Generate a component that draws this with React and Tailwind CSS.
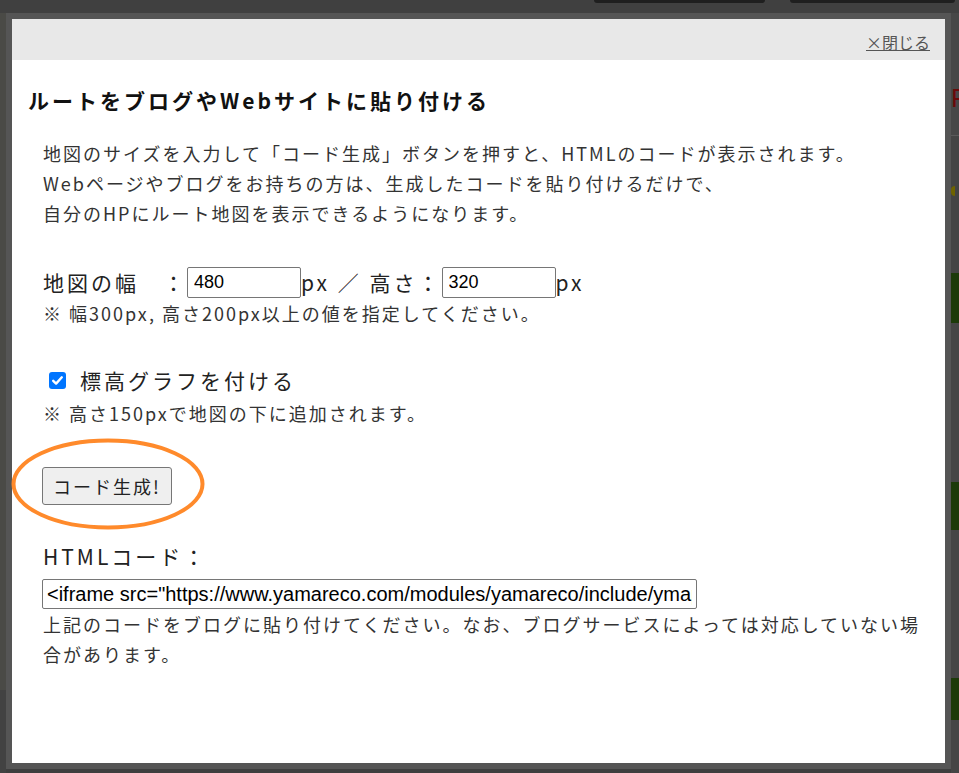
import { useState } from 'react';

const CODE = '<iframe src="https://www.yamareco.com/modules/yamareco/include/ymaprt.php?did=0&w=480&h=320&elev=1" width="480" height="470" frameborder="0" scrolling="no"></iframe>';

function CheckMark() {
  return (
    <span className="w-[17px] h-[17px] rounded-[3px] bg-[#0075ff] flex items-center justify-center shrink-0">
      <svg width="13" height="13" viewBox="0 0 13 13" fill="none">
        <path d="M2.2 6.8 L5.1 9.6 L10.8 3.3" stroke="white" strokeWidth="2.4" strokeLinecap="round" strokeLinejoin="round" />
      </svg>
    </span>
  );
}

function BackgroundPage() {
  return (
    <div className="w-full h-full flex flex-col bg-[#3e3e3e]">
      <div className="h-[13px] flex justify-end gap-[25px] pr-[4px] bg-[#404040]">
        <div className="w-[171px] h-[3px] rounded-b-[6px] bg-[#1f1f1f]" />
        <div className="w-[165px] h-[3px] rounded-b-[6px] bg-[#1f1f1f]" />
      </div>
      <div className="flex-1 flex">
        <div className="w-[6px] flex flex-col">
          <div className="h-[677px] bg-[#4a4a46]" />
          <div className="flex-1 bg-[#424242]" />
        </div>
        <div className="flex-1" />
        <div className="w-[8px] flex flex-col">
          <div className="h-[122px] bg-[#474747] pt-[72px] overflow-hidden">
            <span className="block text-[26px] leading-[26px] text-[#6b0a0a] font-['Liberation_Sans',sans-serif]">F</span>
          </div>
          <div className="h-[1px] bg-[#5a5a5a]" />
          <div className="h-[137px] bg-[#444] pt-[50px]">
            <div className="w-[4px] h-[10px] rounded-l-full bg-[#6e6300]" />
          </div>
          <div className="h-[50px] bg-[#1c3a09]" />
          <div className="h-[159px] bg-[#454545]" />
          <div className="h-[48px] bg-[#1c3a09]" />
          <div className="h-[148px] bg-[#454545]" />
          <div className="h-[42px] bg-[#1c3a09]" />
          <div className="flex-1 bg-[#454545]" />
        </div>
      </div>
    </div>
  );
}

export default function App() {
  const [w, setW] = useState('480');
  const [h, setH] = useState('320');
  const [elev, setElev] = useState(true);

  return (
    <div className="w-[959px] h-[773px] relative overflow-hidden font-['Noto_Sans_CJK_JP',sans-serif]">
      <BackgroundPage />

      {/* modal */}
      <div className="absolute left-[6px] top-[13px] w-[945px] h-[756px] bg-[#555] p-[6px]">
        <div className="h-full bg-white flex flex-col">
          <div className="h-[41px] shrink-0 bg-[#e8e8e8] flex items-center justify-end pr-[15px] pt-[5px]">
            <a className="text-[16px] leading-[20px] text-[#555] underline cursor-pointer">×閉じる</a>
          </div>

          <div className="pl-[16px]">
            <h2 className="mt-[22px] text-[21px] font-bold tracking-[3px] leading-[36px] text-[#111]">
              ルートをブログやWebサイトに貼り付ける
            </h2>
          </div>

          <div className="pl-[31px] pr-[12px] text-[#333]">
            <p className="mt-[20px] text-[18px] tracking-[2px] leading-[30px]">
              地図のサイズを入力して「コード生成」ボタンを押すと、HTMLのコードが表示されます。<br />
              Webページやブログをお持ちの方は、生成したコードを貼り付けるだけで、<br />
              自分のHPにルート地図を表示できるようになります。
            </p>

            <div className="mt-[39px] h-[31px] flex items-center text-[21px] tracking-[3px] text-[#222]">
              <span>地図の幅　：</span>
              <input
                value={w}
                onChange={e => setW(e.target.value)}
                className="w-[114px] h-[31px] border border-[#767676] rounded-[2px] px-[6px] text-[18px] tracking-normal text-black font-['Liberation_Sans',sans-serif] outline-none"
              />
              <span>px ／ 高さ：</span>
              <input
                value={h}
                onChange={e => setH(e.target.value)}
                className="w-[114px] h-[31px] border border-[#767676] rounded-[2px] px-[6px] text-[18px] tracking-normal text-black font-['Liberation_Sans',sans-serif] outline-none"
              />
              <span>px</span>
            </div>
            <p className="text-[18px] tracking-[2px] leading-[30px]">※ 幅300px, 高さ200px以上の値を指定してください。</p>

            <label className="mt-[34px] h-[36px] flex items-center cursor-pointer" onClick={() => setElev(!elev)}>
              <span className="ml-[6px]">{elev ? <CheckMark /> : <span className="block w-[17px] h-[17px] rounded-[3px] border border-[#767676]" />}</span>
              <span className="ml-[14px] text-[21px] tracking-[3px] leading-[36px] text-[#222]">標高グラフを付ける</span>
            </label>
            <p className="text-[18px] tracking-[2px] leading-[30px]">※ 高さ150pxで地図の下に追加されます。</p>

            <button className="mt-[39px] -ml-[1px] w-[130px] h-[38px] border border-[#767676] bg-[#efefef] rounded-[3px] text-[18px] tracking-[2px] text-[#222] flex items-center justify-center">
              コード生成!
            </button>

            <div className="mt-[33px] text-[21px] tracking-[3px] leading-[36px] text-[#222]">HTMLコード：</div>
            <input
              readOnly
              value={CODE}
              className="mt-[5px] -ml-[1px] block w-[655px] h-[30px] border border-[#767676] rounded-[2px] px-[4px] text-[20px] text-black font-['Liberation_Sans',sans-serif] outline-none"
            />
            <p className="text-[18px] tracking-[2px] leading-[30px]">
              上記のコードをブログに貼り付けてください。なお、ブログサービスによっては対応していない場合があります。
            </p>
          </div>
        </div>
      </div>

      {/* orange annotation ring */}
      <svg className="absolute left-[11px] top-[438px]" width="194" height="92" viewBox="0 0 194 92">
        <ellipse cx="97" cy="46" rx="94.5" ry="43.5" fill="none" stroke="#ff8a2b" strokeWidth="4" />
      </svg>
    </div>
  );
}
